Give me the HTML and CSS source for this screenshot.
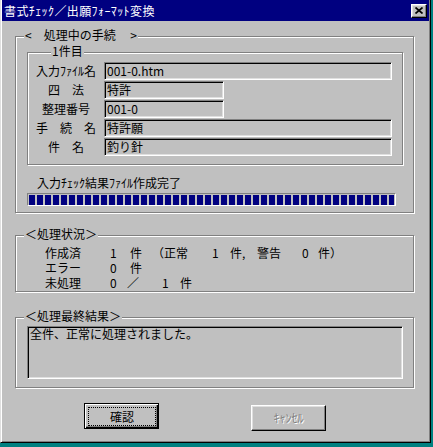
FILE: index.html
```html
<!DOCTYPE html>
<html lang="ja">
<head>
<meta charset="utf-8">
<title>書式ﾁｪｯｸ／出願ﾌｫｰﾏｯﾄ変換</title>
<link rel="stylesheet" href="styles.css">
</head>
<body>
<div class="window">
  <div class="titlebar">
    <span class="title">書式ﾁｪｯｸ／出願ﾌｫｰﾏｯﾄ変換</span>
    <span class="close"><svg width="8" height="7" viewBox="0 0 8 7"><path d="M0.5 0.5 L7.5 6.5 M7.5 0.5 L0.5 6.5" stroke="#000" stroke-width="1.7" fill="none"/></svg></span>
  </div>
  <div class="client">
    <div class="group g1">
      <div class="legend">&lt;　処理中の手続　 &gt;</div>
      <div class="group inner">
        <div class="legend l-item">1件目</div>
        <div class="form">
          <div class="lbl">入力ﾌｧｲﾙ名</div><div class="field long">001-0.htm</div>
          <div class="lbl">四　法</div><div class="field short">特許</div>
          <div class="lbl">整理番号</div><div class="field short">001-0</div>
          <div class="lbl">手　続　名</div><div class="field long">特許願</div>
          <div class="lbl">件　名</div><div class="field long">釣り針</div>
        </div>
      </div>
      <div class="prog-label">入力ﾁｪｯｸ結果ﾌｧｲﾙ作成完了</div>
      <div class="progress"><div class="blocks"></div></div>
    </div>

    <div class="group g2">
      <div class="legend">＜処理状況＞</div>
      <div class="rows">
        <div class="row"><span class="c65">作成済</span><span class="c20">1</span><span class="c22">件</span><span class="c60">（正常</span><span class="c18">1</span><span class="c27">件,</span><span class="c45">警告</span><span class="c16">0</span><span>件）</span></div>
        <div class="row"><span class="c65">エラー</span><span class="c20">0</span><span>件</span></div>
        <div class="row"><span class="c65">未処理</span><span class="c17">0</span><span class="c35">／</span><span class="c18">1</span><span>件</span></div>
      </div>
    </div>

    <div class="group g3">
      <div class="legend">＜処理最終結果＞</div>
      <div class="memo">全件、正常に処理されました。</div>
    </div>

    <div class="buttons">
      <div class="btn default"><span class="focus">確認</span></div>
      <div class="btn disabled"><span class="btn-text">ｷｬﾝｾﾙ</span></div>
    </div>
  </div>
</div>
</body>
</html>
```

FILE: styles.css
```css
body {
  margin: 0;
  background: #008080;
  font-family: "Noto Sans CJK JP", "Noto Sans CJK SC", sans-serif;
  font-size: 12px;
  color: #000;
}

.window {
  width: 431px;
  height: 443px;
  box-sizing: border-box;
  background: #c0c0c0;
  border-left: 1px solid #dfdfdf;
  border-right: 1px solid #000;
  border-bottom: 1px solid #000;
  padding: 0 1px 1px 1px;
  box-shadow: inset 1px 0 #fff, inset -1px -1px #808080;
}

.titlebar {
  height: 21px;
  background: #000080;
  color: #fff;
  display: flex;
  align-items: center;
  justify-content: space-between;
  padding: 0 2px;
}

.title {
  line-height: 21px;
  white-space: nowrap;
  letter-spacing: 0.4px;
}

.close {
  width: 16px;
  height: 14px;
  box-sizing: border-box;
  background: #c0c0c0;
  border: 1px solid;
  border-color: #fff #000 #000 #fff;
  box-shadow: inset -1px -1px #808080, inset 1px 1px #dfdfdf;
  display: flex;
  align-items: center;
  justify-content: center;
}

.close svg {
  display: block;
}

.client {
  padding-left: 13px;
}

.group {
  box-sizing: border-box;
  border: 1px solid #808080;
  box-shadow: inset 1px 1px #fff, 1px 1px #fff;
}

.legend {
  width: fit-content;
  height: 14px;
  line-height: 14px;
  margin: -9px 0 -5px 8px;
  padding: 0 1px;
  background: #c0c0c0;
  white-space: pre;
}

.g1 {
  width: 399px;
  height: 177px;
  margin-top: 15px;
}

.inner {
  width: 376px;
  height: 113px;
  margin: 15px 0 0 11px;
}

.inner .l-item {
  margin-left: 23px;
}

.form {
  display: grid;
  grid-template-columns: 76px auto;
  row-gap: 1px;
  justify-items: start;
  margin-top: 9px;
}

.lbl {
  justify-self: center;
  line-height: 18px;
  white-space: pre;
}

.field {
  height: 18px;
  box-sizing: border-box;
  border: 1px solid;
  border-color: #808080 #fff #fff #808080;
  box-shadow: inset 1px 1px #000, inset -1px -1px #dfdfdf;
  padding-left: 2px;
  line-height: 16px;
  white-space: nowrap;
}

.long { width: 288px; }
.short { width: 120px; }

.prog-label {
  margin: 11px 0 0 21px;
  line-height: 14px;
}

.progress {
  width: 369px;
  height: 13px;
  box-sizing: border-box;
  margin: 3px 0 0 11px;
  border: 1px solid;
  border-color: #808080 #fff #fff #808080;
  padding: 1px 1px 0 1px;
}

.blocks {
  height: 10px;
  background: repeating-linear-gradient(to right, #000080 0 6px, transparent 6px 8px);
}

.g2 {
  width: 399px;
  height: 57px;
  margin-top: 22px;
}

.rows {
  margin: 9px 0 0 29px;
}

.row {
  display: flex;
  height: 15px;
  line-height: 15px;
  white-space: pre;
}

.row span {
  flex-shrink: 0;
  height: 15px;
  overflow: hidden;
}
.c65 { width: 65px; }
.c60 { width: 60px; }
.c45 { width: 45px; }
.c35 { width: 35px; }
.c27 { width: 27px; }
.c22 { width: 22px; }
.c20 { width: 20px; }
.c18 { width: 18px; }
.c17 { width: 17px; }
.c16 { width: 16px; }

.g3 {
  width: 399px;
  height: 71px;
  margin-top: 25px;
}

.memo {
  width: 376px;
  height: 53px;
  box-sizing: border-box;
  margin: 8px 0 0 11px;
  border: 1px solid;
  border-color: #808080 #fff #fff #808080;
  box-shadow: inset 1px 1px #000, inset -1px -1px #dfdfdf;
  padding: 0 2px;
  line-height: 14px;
}

.buttons {
  display: flex;
  align-items: flex-start;
  gap: 92px;
  margin: 15px 0 0 69px;
}

.btn {
  width: 75px;
  height: 26px;
  box-sizing: border-box;
  display: flex;
}

.default {
  border: 1px solid #000;
  box-shadow: inset 1px 1px #fff, inset -1px -1px #000, inset -2px -2px #808080;
  padding: 3px 2px 2px 3px;
}

.focus {
  flex: 1;
  border: 1px dotted #000;
  display: flex;
  align-items: center;
  justify-content: center;
  line-height: 14px;
}

.disabled {
  margin-top: 2px;
  border: 1px solid;
  border-color: #fff #000 #000 #fff;
  box-shadow: inset -1px -1px #808080, inset 1px 1px #dfdfdf;
  align-items: center;
  justify-content: center;
  color: #808080;
  text-shadow: 1px 1px #fff;
}

.btn-text {
  line-height: 14px;
}
```
